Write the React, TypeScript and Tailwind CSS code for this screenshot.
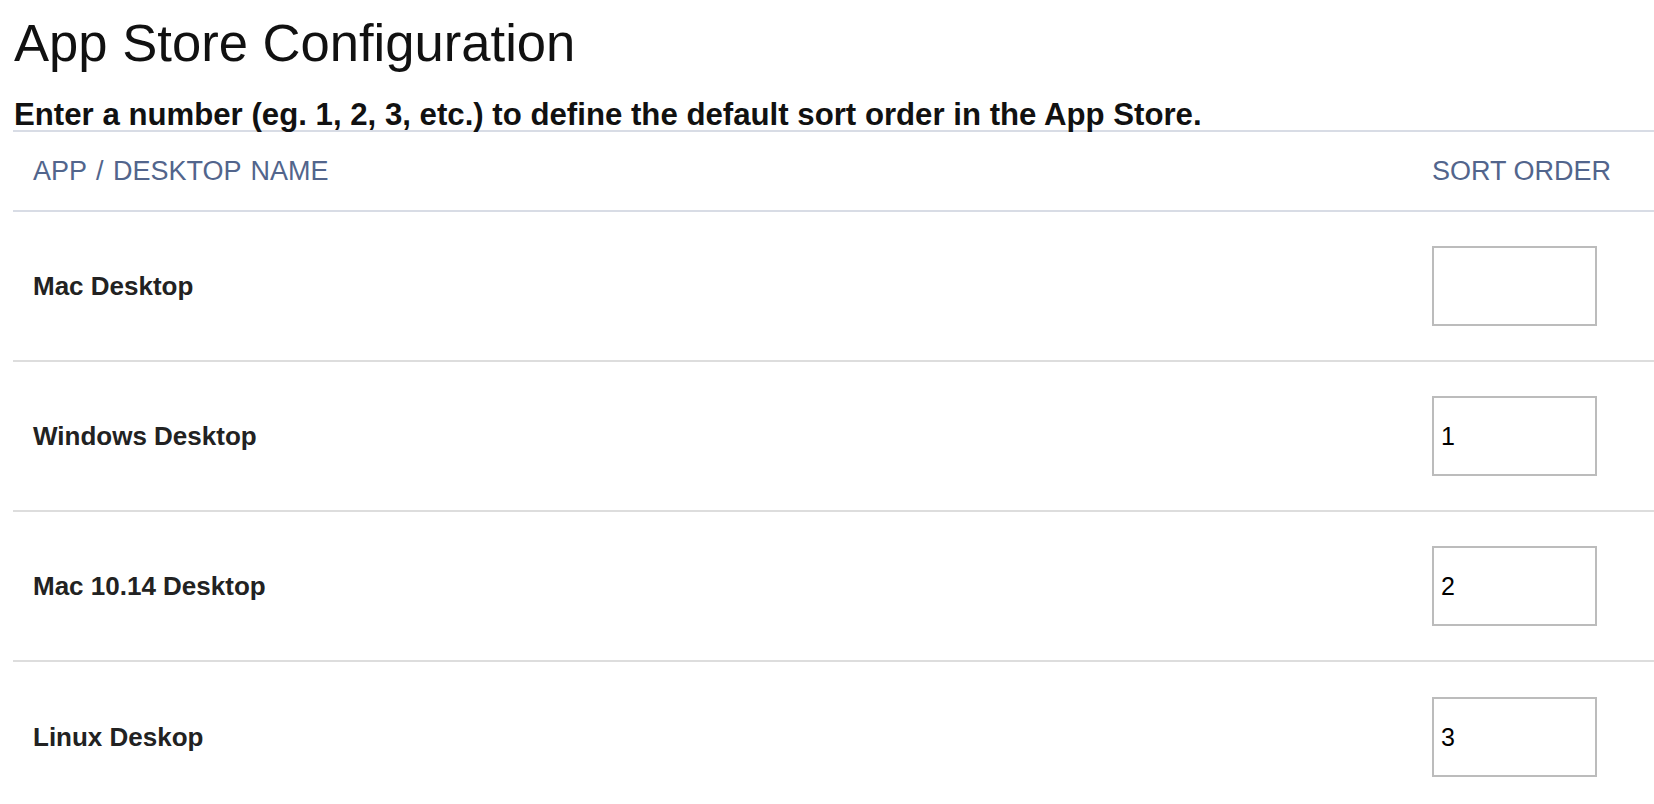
import React from "react";

const rows = [
  { name: "Mac Desktop", value: "" },
  { name: "Windows Desktop", value: "1" },
  { name: "Mac 10.14 Desktop", value: "2" },
  { name: "Linux Deskop", value: "3" },
];

export default function App() {
  return (
    <div
      className="w-[1654px] h-[804px] overflow-hidden bg-white"
      style={{ fontFamily: '"Liberation Sans", Arial, Helvetica, sans-serif' }}
    >
      <h1 className="ml-[14px] mt-[17px] text-[52.6px] leading-[52px] font-normal text-[#111111]">
        App Store Configuration
      </h1>
      <p className="ml-[14px] mt-[30px] text-[31.2px] leading-[31px] font-bold text-[#111111]">
        Enter a number (eg. 1, 2, 3, etc.) to define the default sort order in the App Store.
      </p>
      <div className="ml-[13px] border-t-2 border-[#d8dce5]">
        <div className="flex h-[80px] items-center border-b-2 border-[#d8dce5] text-[27px] text-[#52658c]">
          <div className="flex-1 pl-[20px] [word-spacing:2px]">APP / DESKTOP NAME</div>
          <div className="w-[222px]">SORT ORDER</div>
        </div>
        {rows.map((r, i) => (
          <div
            key={r.name}
            className={
              "flex h-[150px] items-center " +
              (i < rows.length - 1 ? "border-b-2 border-[#dddddd]" : "")
            }
          >
            <div className="flex-1 pl-[20px] text-[26px] font-bold text-[#222222]">{r.name}</div>
            <div className="w-[222px]">
              <input
                defaultValue={r.value}
                className="block h-[80px] w-[165px] border-2 border-[#bcbcbc] bg-white pl-[7px] text-[25px] text-black outline-none"
                style={{ fontFamily: '"Liberation Sans", Arial, sans-serif' }}
              />
            </div>
          </div>
        ))}
      </div>
    </div>
  );
}
